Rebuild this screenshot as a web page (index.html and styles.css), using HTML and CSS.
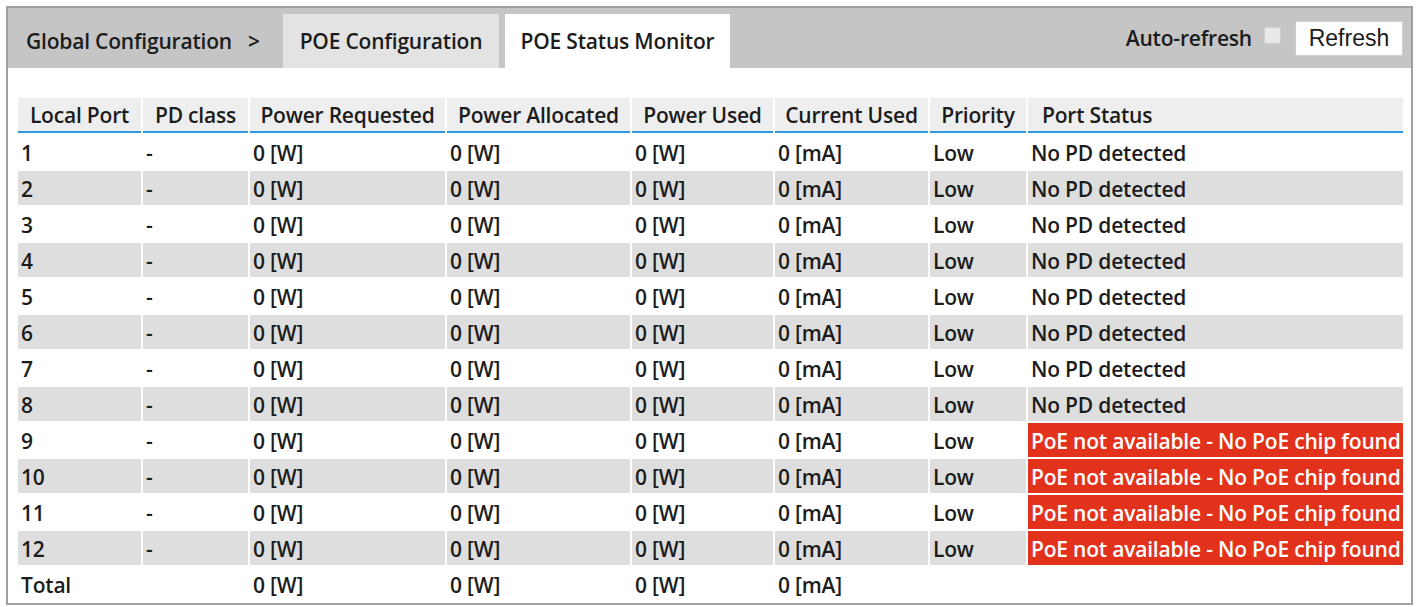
FILE: index.html
```html
<!DOCTYPE html>
<html>
<head>
<meta charset="utf-8">
<link rel="stylesheet" href="styles.css">
</head>
<body>
<div class="frame">
  <div class="topbar">
    <div class="crumb">Global Configuration <span class="gt">&gt;</span></div>
    <div class="tab">POE Configuration</div>
    <div class="tab active">POE Status Monitor</div>
    <div class="spacer"></div>
    <label class="auto">Auto-refresh <span class="check"></span></label>
    <button class="refresh">Refresh</button>
  </div>
  <div class="content">
    <table class="grid">
      <colgroup>
        <col class="c1"><col class="c2"><col class="c3"><col class="c4"><col class="c5"><col class="c6"><col class="c7"><col class="c8">
      </colgroup>
      <thead>
        <tr><th>Local Port</th><th>PD class</th><th>Power Requested</th><th>Power Allocated</th><th>Power Used</th><th>Current Used</th><th>Priority</th><th class="left">Port Status</th></tr>
      </thead>
      <tbody>
        <tr><td>1</td><td>-</td><td>0 [W]</td><td>0 [W]</td><td>0 [W]</td><td>0 [mA]</td><td>Low</td><td>No PD detected</td></tr>
        <tr class="alt"><td>2</td><td>-</td><td>0 [W]</td><td>0 [W]</td><td>0 [W]</td><td>0 [mA]</td><td>Low</td><td>No PD detected</td></tr>
        <tr><td>3</td><td>-</td><td>0 [W]</td><td>0 [W]</td><td>0 [W]</td><td>0 [mA]</td><td>Low</td><td>No PD detected</td></tr>
        <tr class="alt"><td>4</td><td>-</td><td>0 [W]</td><td>0 [W]</td><td>0 [W]</td><td>0 [mA]</td><td>Low</td><td>No PD detected</td></tr>
        <tr><td>5</td><td>-</td><td>0 [W]</td><td>0 [W]</td><td>0 [W]</td><td>0 [mA]</td><td>Low</td><td>No PD detected</td></tr>
        <tr class="alt"><td>6</td><td>-</td><td>0 [W]</td><td>0 [W]</td><td>0 [W]</td><td>0 [mA]</td><td>Low</td><td>No PD detected</td></tr>
        <tr><td>7</td><td>-</td><td>0 [W]</td><td>0 [W]</td><td>0 [W]</td><td>0 [mA]</td><td>Low</td><td>No PD detected</td></tr>
        <tr class="alt"><td>8</td><td>-</td><td>0 [W]</td><td>0 [W]</td><td>0 [W]</td><td>0 [mA]</td><td>Low</td><td>No PD detected</td></tr>
        <tr><td>9</td><td>-</td><td>0 [W]</td><td>0 [W]</td><td>0 [W]</td><td>0 [mA]</td><td>Low</td><td class="err">PoE not available - No PoE chip found</td></tr>
        <tr class="alt"><td>10</td><td>-</td><td>0 [W]</td><td>0 [W]</td><td>0 [W]</td><td>0 [mA]</td><td>Low</td><td class="err">PoE not available - No PoE chip found</td></tr>
        <tr><td>11</td><td>-</td><td>0 [W]</td><td>0 [W]</td><td>0 [W]</td><td>0 [mA]</td><td>Low</td><td class="err">PoE not available - No PoE chip found</td></tr>
        <tr class="alt"><td>12</td><td>-</td><td>0 [W]</td><td>0 [W]</td><td>0 [W]</td><td>0 [mA]</td><td>Low</td><td class="err">PoE not available - No PoE chip found</td></tr>
        <tr><td>Total</td><td></td><td>0 [W]</td><td>0 [W]</td><td>0 [W]</td><td>0 [mA]</td><td></td><td></td></tr>
      </tbody>
    </table>
  </div>
</div>
</body>
</html>
```

FILE: styles.css
```css
* { box-sizing: border-box; }
html, body { margin: 0; padding: 0; background: #ffffff; }
body {
  font-family: "Open Sans", "Noto Sans", sans-serif;
  color: #1c1c1c;
}
.frame {
  margin: 6px 0 0 6px;
  width: 1407px;
  height: 599px;
  border: 2px solid #a0a0a0;
  background: #ffffff;
  display: flex;
  flex-direction: column;
}
.topbar {
  height: 60px;
  background: #c5c5c5;
  display: flex;
  align-items: flex-end;
  padding-left: 18px;
  padding-right: 8px;
}
.crumb {
  height: 54px;
  display: flex;
  align-items: center;
  font-size: 21px;
  font-weight: 600;
  letter-spacing: -0.2px;
  width: 257px;
}
.crumb .gt { margin-left: 16px; }
.tab {
  height: 54px;
  display: flex;
  align-items: center;
  justify-content: center;
  font-size: 21px;
  font-weight: 600;
  letter-spacing: -0.2px;
  background: #e3e3e3;
  width: 216px;
  margin-right: 6px;
}
.tab.active { background: #ffffff; width: 225px; }
.spacer { flex: 1; }
.auto {
  align-self: center;
  display: flex;
  align-items: center;
  font-size: 21px;
  font-weight: 600;
  letter-spacing: -0.2px;
  margin-right: 14px;
}
.check {
  display: inline-block;
  width: 17px;
  height: 17px;
  margin-left: 12px;
  margin-top: -6px;
  background: #e8e8e8;
  border: 1px solid #d0d0d0;
  border-radius: 2px;
}
.refresh {
  align-self: center;
  height: 35px;
  width: 108px;
  background: #ffffff;
  border: 1px solid #cfcfcf;
  font-family: "Liberation Sans", Arial, sans-serif;
  font-size: 23px;
  color: #1c1c1c;
  padding: 0;
}
.content {
  flex: 1;
  padding: 28px 0 0 8px;
}
.grid {
  border-collapse: separate;
  border-spacing: 2px;
  table-layout: fixed;
  width: 1389px;
  font-size: 21px;
  font-weight: 600;
  letter-spacing: -0.2px;
}
.c1 { width: 123px; }
.c2 { width: 105px; }
.c3 { width: 195px; }
.c4 { width: 183px; }
.c5 { width: 141px; }
.c6 { width: 153px; }
.c7 { width: 96px; }
.c8 { width: 375px; }
.grid th {
  height: 35px;
  background: #eeeeee;
  border-bottom: 2px solid #2d9ae0;
  font-weight: 600;
  text-align: center;
  padding: 0 2px;
  white-space: nowrap;
}
.grid th.left { text-align: left; padding-left: 14px; }
.grid td {
  height: 34px;
  padding: 2px 3px 0;
  white-space: nowrap;
  overflow: hidden;
}
.grid tr.alt td { background: #dedede; }
.grid td.err, .grid tr.alt td.err {
  background: #e3321b;
  color: #ffffff;
}
```
